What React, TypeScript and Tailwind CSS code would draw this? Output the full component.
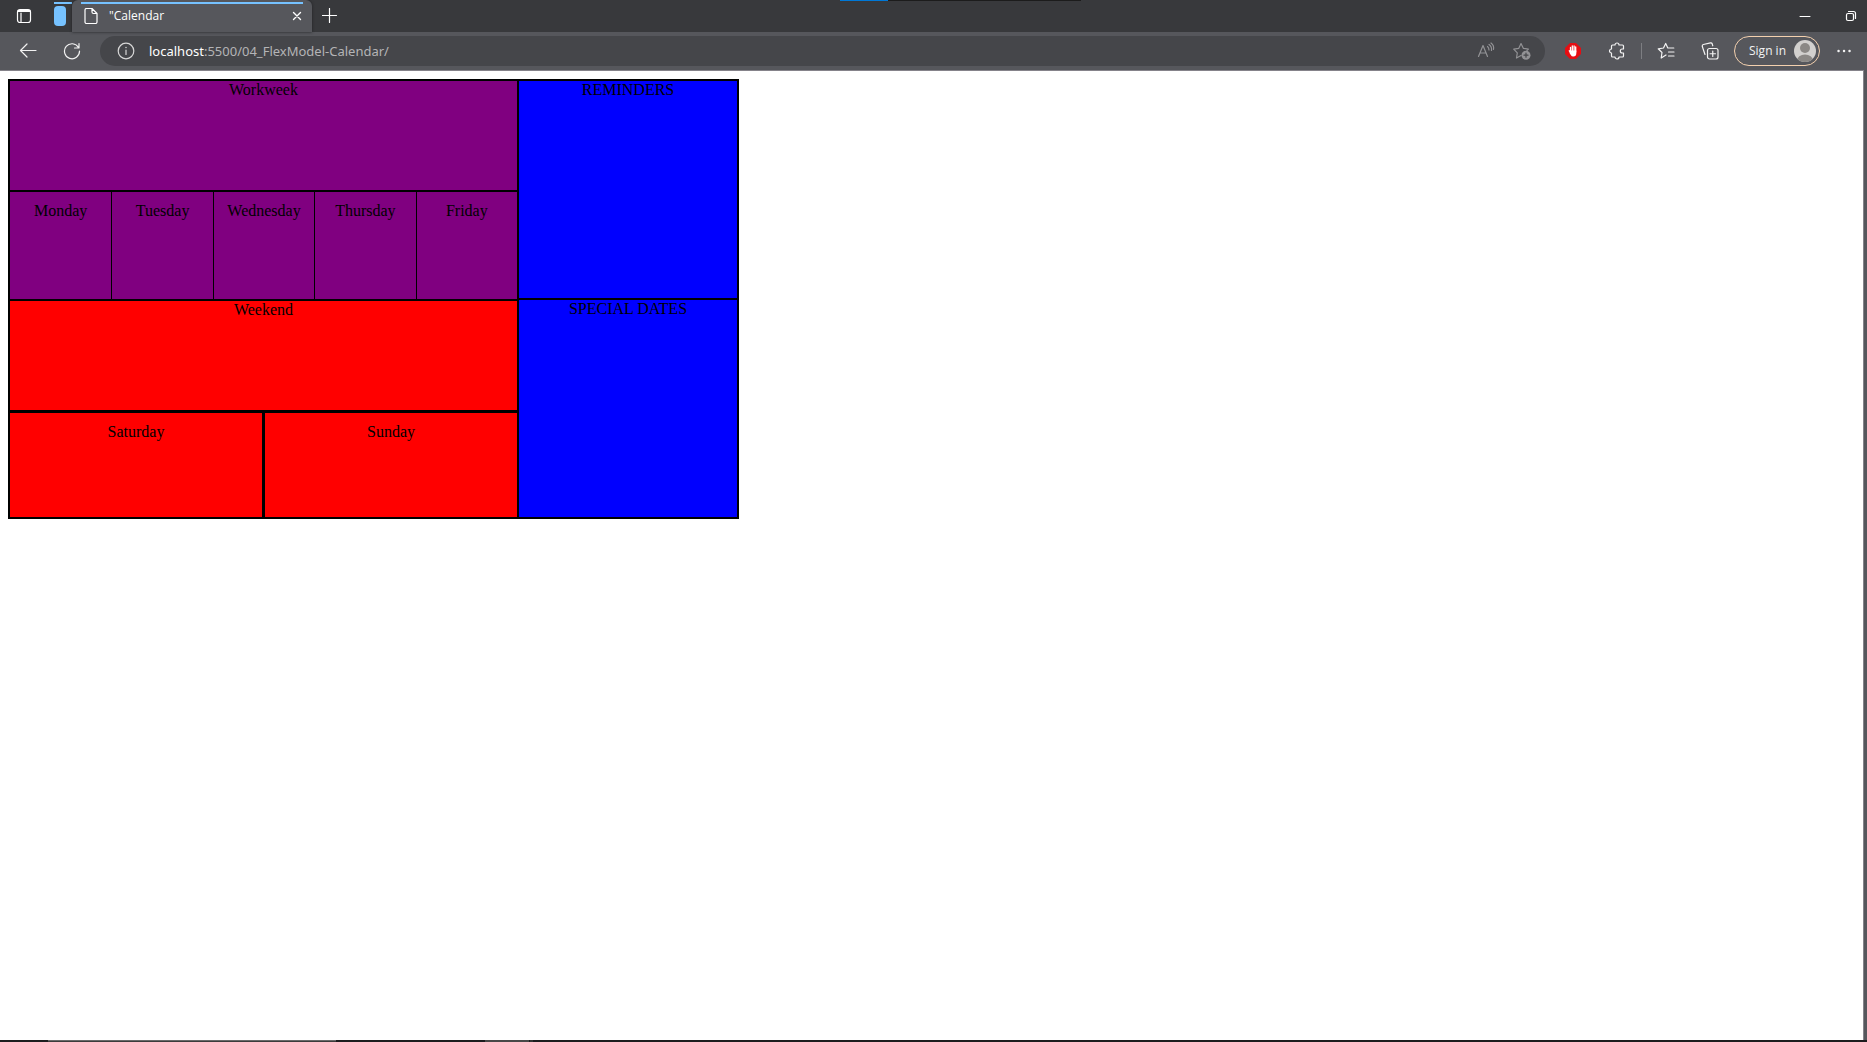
import type { ReactNode } from "react";

const weekdays = ["Monday", "Tuesday", "Wednesday", "Thursday", "Friday"];

type IconButtonProps = { label: string; className: string; children: ReactNode };

function IconButton({ label, className, children }: IconButtonProps) {
  return (
    <button type="button" aria-label={label} className={`flex shrink-0 items-center justify-center ${className}`}>
      {children}
    </button>
  );
}

type IconProps = { size?: number; className?: string; children: ReactNode };

function Icon({ size = 18, className = "", children }: IconProps) {
  return (
    <svg
      width={size}
      height={size}
      viewBox={`0 0 ${size} ${size}`}
      fill="none"
      stroke="currentColor"
      strokeWidth="1.2"
      strokeLinecap="round"
      strokeLinejoin="round"
      aria-hidden="true"
      className={className}
    >
      {children}
    </svg>
  );
}

function TabBar() {
  return (
    <header className="relative flex h-8 bg-[#38393c] text-white">
      <div aria-hidden="true" className="absolute left-[45%] top-0 flex h-px w-[241px]">
        <div className="w-12 bg-[#0078d7]" />
        <div className="flex-1 bg-[#1c1c1c]" />
      </div>
      <IconButton label="Tab actions" className="w-12">
        <Icon size={16}>
          <rect x="1.5" y="1.5" width="13" height="13" rx="2.5" />
          <path d="M2 3.5h12M5 5v9" />
          <path d="M2.5 3h11" strokeWidth="2" />
        </Icon>
      </IconButton>
      <div className="flex w-6 flex-col pl-1.5 pt-0.5">
        <div className="h-0.5 bg-[#76c2ff]" />
        <div className="mt-0.5 h-5 w-3 rounded-sm bg-[#76c2ff]" />
      </div>
      <div className="flex h-8 w-60 flex-col rounded-t-md bg-[#56575c] px-[9px] pt-0.5 shadow-[0_0_3px_#202124]">
        <div className="h-0.5 shrink-0 bg-[#76c2ff]" />
        <div className="flex h-6 items-center pl-1">
          <Icon size={16} className="-ml-0.5">
            <path d="M3.5 0.5h5.5l5 5v8.5a1.5 1.5 0 0 1-1.5 1.5h-9a1.5 1.5 0 0 1-1.5-1.5v-12a1.5 1.5 0 0 1 1.5-1.5zM9 0.5v3.5a1.5 1.5 0 0 0 1.5 1.5h3.5" />
          </Icon>
          <span className="ml-2.5 flex-1 text-xs">"Calendar</span>
          <IconButton label="Close tab" className="size-3">
            <Icon size={12}>
              <path d="M2.500 2.500l7 7M9.500 2.500l-7 7" strokeWidth="1.4" />
            </Icon>
          </IconButton>
        </div>
      </div>
      <IconButton label="New tab" className="w-9">
        <Icon size={16}>
          <path d="M7.500 0.500v14M0.500 7.500h14" />
        </Icon>
      </IconButton>
      <div className="ml-auto flex gap-3.5">
        <IconButton label="Minimize" className="w-8">
          <Icon size={12}>
            <path d="M1 6.500h10" strokeWidth="1" />
          </Icon>
        </IconButton>
        <IconButton label="Restore" className="w-8">
          <Icon size={12}>
            <rect x="1.500" y="3.500" width="7" height="7" rx="1.500" />
            <path d="M3.500 1.500h5a2 2 0 0 1 2 2v5" />
          </Icon>
        </IconButton>
      </div>
    </header>
  );
}

function AddressBar() {
  return (
    <div className="ml-1.5 flex h-[30px] min-w-0 flex-1 items-center rounded-full bg-[#45464a] pl-4 pr-[5px] font-['Noto_Sans',sans-serif]">
      <IconButton label="View site information" className="w-5 text-[#d8d8d8]">
        <Icon>
          <circle cx="9" cy="9" r="7.800" />
          <path d="M9 8v4.500" />
          <path d="M9 5.500v.1" strokeWidth="1.500" />
        </Icon>
      </IconButton>
      <label htmlFor="address" className="ml-[13px] text-[13px] leading-5 text-white">
        localhost
      </label>
      <input
        id="address"
        type="text"
        defaultValue=":5500/04_FlexModel-Calendar/"
        className="min-w-0 flex-1 bg-transparent p-0 text-[13px] leading-5 text-[#b4b4b6] outline-none"
      />
      <IconButton label="Read aloud" className="w-9 text-[#929295]">
        <Icon>
          <path d="M1.500 14.500L6 3.500l4.500 11M3 11h6M10.500 4.500q1.500 1.200 1.500 3.500M12 2.500q3 2 2.500 6M14 1q3.300 2.300 2.500 6.500" />
        </Icon>
      </IconButton>
      <IconButton label="Add to favorites" className="w-9 text-[#929295]">
        <Icon>
          <path d="M8 13.500l-4.500 2.500.800-5.200L0.700 7.100l5.100-.800L8 1.500l2.300 4.800 5.100.800-1.500 1.500" />
          <circle cx="13" cy="13.200" r="4.500" fill="currentColor" stroke="none" />
          <path d="M13 11.200v4M11 13.200h4" stroke="#45464a" />
        </Icon>
      </IconButton>
    </div>
  );
}

function Toolbar() {
  return (
    <div className="flex h-[38px] items-center bg-[#56575c] pl-1.5 pr-px text-[#f2f2f2]">
      <IconButton label="Back" className="h-full w-11">
        <Icon>
          <path d="M17 8.500H1.500M8 2L1.500 8.500 8 15" />
        </Icon>
      </IconButton>
      <IconButton label="Refresh" className="h-full w-11">
        <Icon>
          <path d="M15.500 5.500A7.500 7.500 0 1 0 16.500 9M16 1.500v4.500h-4.500" />
        </Icon>
      </IconButton>
      <AddressBar />
      <IconButton label="Ad blocker" className="ml-1.5 h-full w-11">
        <Icon>
          <path d="M6 1h6l5 5v6l-5 5H6l-5-5V6z" fill="#e60d12" stroke="none" />
          <path
            d="M6.500 5.500v4M8.300 4v5M10.100 4v5M11.700 5v5M5.300 8.800l2 2.500"
            stroke="#fff"
            strokeWidth="1.300"
          />
          <path d="M6 8.500h6.300v3q0 3-3 3-1.800 0-2.500-1.500L5.500 11z" fill="#fff" stroke="none" />
        </Icon>
      </IconButton>
      <IconButton label="Extensions" className="h-full w-11">
        <Icon>
          <path d="M4.500 3h2.500a2 2 0 0 1 4 0h3.500q1 0 1 1v3h-1.200a2 2 0 0 0 0 4h1.200v3q0 1-1 1H11a2 2 0 0 1-4 0H4.500q-1 0-1-1v-3a2 2 0 0 1 0-4V4q0-1 1-1z" />
        </Icon>
      </IconButton>
      <div className="mx-0.5 h-4 w-px bg-[#7d7e82]" />
      <IconButton label="Favorites" className="h-full w-11">
        <Icon>
          <path d="M9 13l-4.800 3 .800-5.500L1.200 6.800l5.300-.800L8.700 1.500 10.800 6h6M11.500 10h5.500M11.500 14h5.500" />
        </Icon>
      </IconButton>
      <IconButton label="Collections" className="h-full w-11">
        <Icon>
          <rect x="6.500" y="6.500" width="10.500" height="10.500" rx="2" />
          <path d="M11.750 9v5.500M9 11.750h5.500M4 12.500L1.300 4.500Q1 3 2.300 2.500l7.200-1.700q1.300-.200 1.700 1l.600 2" />
        </Icon>
      </IconButton>
      <button
        type="button"
        className="ml-0.5 flex h-[30px] shrink-0 items-center gap-2 rounded-full border border-[#f3d0ae] pl-3.5 pr-[3px] text-xs"
      >
        Sign in
        <svg width="22" height="22" viewBox="0 0 22 22" aria-hidden="true">
          <clipPath id="avatar">
            <circle cx="11" cy="11" r="11" />
          </clipPath>
          <g clipPath="url(#avatar)">
            <rect width="22" height="22" fill="#d2d0ce" />
            <circle cx="11" cy="8" r="5" fill="#8b8885" />
            <ellipse cx="11" cy="20.500" rx="8" ry="6" fill="#8b8885" />
          </g>
        </svg>
      </button>
      <IconButton label="Settings and more" className="ml-0.5 h-full w-11">
        <Icon>
          <path d="M3.500 9h.1M9 9h.1M14.500 9h.1" strokeWidth="2.400" />
        </Icon>
      </IconButton>
    </div>
  );
}

function Calendar() {
  return (
    <main className="flex w-[731px] border-2 border-black bg-black text-center font-['Liberation_Serif',serif] text-base leading-[18px] text-black">
      <div className="flex w-[507px] flex-col">
        <h2 className="h-[109px] bg-[#800080]">Workweek</h2>
        <div className="mt-0.5 grid h-[107px] grid-cols-5 bg-[#800080]">
          {weekdays.map((day) => (
            <div key={day} className="border-l border-black pt-2.5 first:border-l-0">
              {day}
            </div>
          ))}
        </div>
        <h2 className="mt-0.5 h-[109px] bg-[#ff0000]">Weekend</h2>
        <div className="mt-[3px] grid h-[104px] grid-cols-2 gap-[3px]">
          <div className="bg-[#ff0000] pt-2.5">Saturday</div>
          <div className="bg-[#ff0000] pt-2.5">Sunday</div>
        </div>
      </div>
      <div className="ml-0.5 flex flex-1 flex-col gap-0.5">
        <h2 className="flex-1 bg-[#0000ff]">REMINDERS</h2>
        <h2 className="flex-1 bg-[#0000ff]">SPECIAL DATES</h2>
      </div>
    </main>
  );
}

function Taskbar() {
  return (
    <footer className="flex h-0.5 bg-[#1c1c1e]">
      <div className="ml-12 w-72 border-t border-[#6a6a6a] bg-[#3c3c3c]" />
      <div className="ml-[149px] w-11 bg-[#484848]" />
      <div className="w-1 border-l border-[#1c1c1e] bg-[#333333]" />
    </footer>
  );
}

export default function App() {
  return (
    <div className="flex min-h-screen flex-col bg-[#56575c] font-['Open_Sans','Noto_Sans',sans-serif]">
      <TabBar />
      <Toolbar />
      <div className="mr-[3px] flex-1 border-r border-t border-[#85838a] bg-white p-2">
        <Calendar />
      </div>
      <Taskbar />
    </div>
  );
}
